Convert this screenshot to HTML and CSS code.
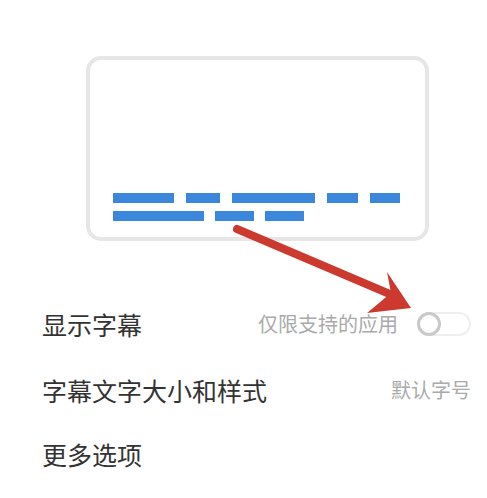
FILE: index.html
```html
<!DOCTYPE html>
<html lang="zh-CN">
<head>
    <meta charset="UTF-8">
    <meta name="viewport" content="width=device-width, initial-scale=1.0">
    <title>字幕</title>
    <link rel="stylesheet" href="styles.css">
</head>
<body>
    <div class="page">
        <div class="preview">
            <div class="caption-card">
                <div class="caption-line">
                    <span class="bar" style="width: 61px"></span>
                    <span class="bar" style="width: 34px"></span>
                    <span class="bar" style="width: 83px"></span>
                    <span class="bar" style="width: 31px"></span>
                    <span class="bar" style="width: 30px"></span>
                </div>
                <div class="caption-line">
                    <span class="bar" style="width: 91px"></span>
                    <span class="bar" style="width: 39px"></span>
                    <span class="bar" style="width: 39px"></span>
                </div>
            </div>
        </div>

        <div class="settings">
            <div class="setting-row first">
                <div class="setting-label">显示字幕</div>
                <div class="setting-value">仅限支持的应用</div>
                <label class="switch">
                    <input type="checkbox">
                    <span class="slider"></span>
                </label>
            </div>
            <div class="setting-row">
                <div class="setting-label">字幕文字大小和样式</div>
                <div class="setting-value">默认字号</div>
            </div>
            <div class="setting-row last">
                <div class="setting-label">更多选项</div>
            </div>
        </div>

        <svg class="arrow" viewBox="0 0 487 498" width="487" height="498">
            <line x1="237" y1="229" x2="392" y2="295" stroke="#cc3a2f" stroke-width="8" stroke-linecap="round"/>
            <polygon points="411,308 387,272 391,293 367,313" fill="#cc3a2f"/>
        </svg>
    </div>
</body>
</html>
```

FILE: styles.css
```css
body {
    margin: 0;
    background-color: #fff;
    font-family: "Noto Sans CJK SC", "Noto Sans", sans-serif;
    color: #333;
}
.page {
    position: relative;
    width: 487px;
    height: 498px;
    overflow: hidden;
}
.preview {
    padding: 56px 0 0 86px;
}
.caption-card {
    box-sizing: border-box;
    width: 343px;
    height: 185px;
    border: 4px solid #e6e6e6;
    border-radius: 15px;
    padding: 0 23px 16px;
    display: flex;
    flex-direction: column;
    justify-content: flex-end;
    gap: 8px;
}
.caption-line {
    display: flex;
    gap: 12px;
}
.caption-line + .caption-line {
    gap: 11px;
}
.bar {
    display: block;
    height: 10px;
    background-color: #3b87dc;
}
.settings {
    padding-top: 50px;
}
.setting-row {
    display: flex;
    align-items: center;
    height: 66px;
    padding: 0 16px 0 42px;
}
.setting-row.last {
    height: 62px;
}
.setting-label {
    flex-grow: 1;
    font-size: 25px;
    line-height: 1;
    color: #333;
}
.setting-value {
    font-size: 20px;
    line-height: 1;
    color: #aaa;
}
.switch {
    position: relative;
    display: inline-block;
    width: 54px;
    height: 24px;
    margin-left: 19px;
}
.switch input {
    opacity: 0;
    width: 0;
    height: 0;
}
.slider {
    position: absolute;
    top: 0;
    left: 0;
    right: 0;
    bottom: 0;
    box-sizing: border-box;
    border: 2px solid #efefef;
    border-radius: 12px;
    cursor: pointer;
}
.slider:before {
    position: absolute;
    content: "";
    box-sizing: border-box;
    width: 24px;
    height: 24px;
    left: -2px;
    top: -2px;
    border: 3px solid #c9c9c9;
    border-radius: 50%;
    background-color: #fff;
}
.arrow {
    position: absolute;
    top: 0;
    left: 0;
    pointer-events: none;
}
```
